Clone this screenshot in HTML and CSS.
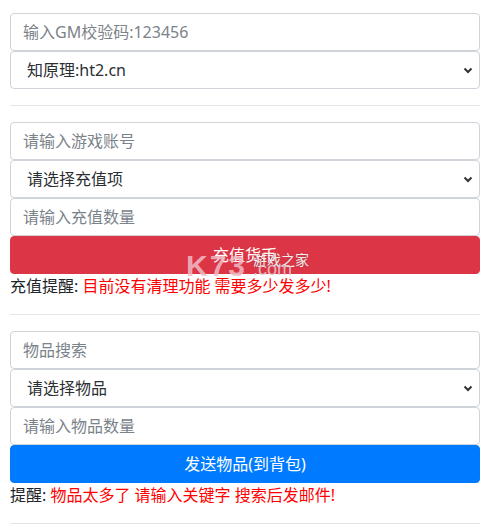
FILE: index.html
```html
<!DOCTYPE html>
<html lang="zh-CN">
<head>
<meta charset="utf-8">
<title>GM</title>
<link rel="stylesheet" href="styles.css">
</head>
<body>
<div class="page">
  <section class="group">
    <input class="field" type="text" placeholder="输入GM校验码:123456">
    <select class="field select"><option>知原理:ht2.cn</option></select>
  </section>
  <hr class="rule">
  <section class="group">
    <input class="field" type="text" placeholder="请输入游戏账号">
    <select class="field select"><option>请选择充值项</option></select>
    <input class="field" type="text" placeholder="请输入充值数量">
    <div class="btn-wrap">
      <button class="btn btn-red">充值货币</button>
      <div class="watermark">
        <span class="wm-k73">K73</span>
        <span class="wm-cn">游戏之家</span>
        <span class="wm-com">.com</span>
      </div>
    </div>
    <p class="note">充值提醒: <span class="warn">目前没有清理功能 需要多少发多少!</span></p>
  </section>
  <hr class="rule">
  <section class="group">
    <input class="field" type="text" placeholder="物品搜索">
    <select class="field select"><option>请选择物品</option></select>
    <input class="field" type="text" placeholder="请输入物品数量">
    <button class="btn btn-blue">发送物品(到背包)</button>
    <p class="note">提醒: <span class="warn">物品太多了 请输入关键字 搜索后发邮件!</span></p>
  </section>
  <hr class="rule">
</div>
</body>
</html>
```

FILE: styles.css
```css
* { box-sizing: border-box; }
html, body { margin: 0; padding: 0; background: #fff; }
body {
  font-family: "Noto Sans", "Noto Sans CJK SC", sans-serif;
  font-size: 16px;
  line-height: 1.5;
  color: #212529;
}
.page {
  width: 495px;
  padding: 13px 15px 0 10px;
}
.group {
  display: flex;
  flex-direction: column;
}
.field {
  display: block;
  width: 100%;
  height: 38px;
  margin: 0;
  padding: 0 12px;
  font-family: inherit;
  font-size: 16px;
  line-height: 1.5;
  color: #495057;
  background: #fff;
  border: 1px solid #ced4da;
  border-radius: 4px;
  outline: none;
}
.field::placeholder { color: #7b838a; opacity: 1; }
.select {
  -webkit-appearance: none;
  appearance: none;
  padding-left: 16px;
  color: #2b2f33;
  background: #fff url("data:image/svg+xml,%3Csvg xmlns='http://www.w3.org/2000/svg' width='10' height='8' viewBox='0 0 10 8'%3E%3Cpath d='M1.5 2.5 L5 6 L8.5 2.5' fill='none' stroke='%23333' stroke-width='2'/%3E%3C/svg%3E") no-repeat right 6px center;
}
.btn {
  display: block;
  width: 100%;
  height: 38px;
  margin: 0;
  padding: 0 12px;
  font-family: inherit;
  font-size: 16px;
  line-height: 1.5;
  color: #fff;
  border: 1px solid transparent;
  border-radius: 4px;
  text-align: center;
}
.btn-red { background: #dc3545; border-color: #dc3545; }
.btn-blue { background: #007bff; border-color: #007bff; }
.btn-wrap { position: relative; }
.watermark {
  position: absolute;
  left: 0;
  top: 0;
  width: 100%;
  height: 100%;
  pointer-events: none;
}
.wm-k73 {
  position: absolute;
  left: 176px;
  top: 13px;
  font-family: "Liberation Sans", sans-serif;
  font-weight: bold;
  font-size: 30px;
  line-height: 34px;
  letter-spacing: 2px;
  color: rgba(240, 188, 198, 0.85);
}
.wm-cn {
  position: absolute;
  left: 243px;
  top: 15px;
  font-family: "Noto Sans CJK SC", sans-serif;
  font-size: 14px;
  line-height: 16px;
  white-space: nowrap;
  color: rgba(255, 255, 255, 0.92);
  text-shadow: 0 0 1px rgba(90, 90, 90, 0.6);
}
.wm-com {
  position: absolute;
  left: 243px;
  top: 24px;
  font-family: "Liberation Sans", sans-serif;
  font-size: 18px;
  line-height: 18px;
  color: rgba(230, 200, 208, 0.9);
}
.note {
  margin: 0 0 16px;
  line-height: 24px;
}
.warn { color: #ff0000; }
.rule {
  margin: 0 0 16px;
  border: 0;
  border-top: 1px solid rgba(0, 0, 0, 0.1);
  height: 0;
}
.group:first-child + .rule { margin-top: 16px; }
```
